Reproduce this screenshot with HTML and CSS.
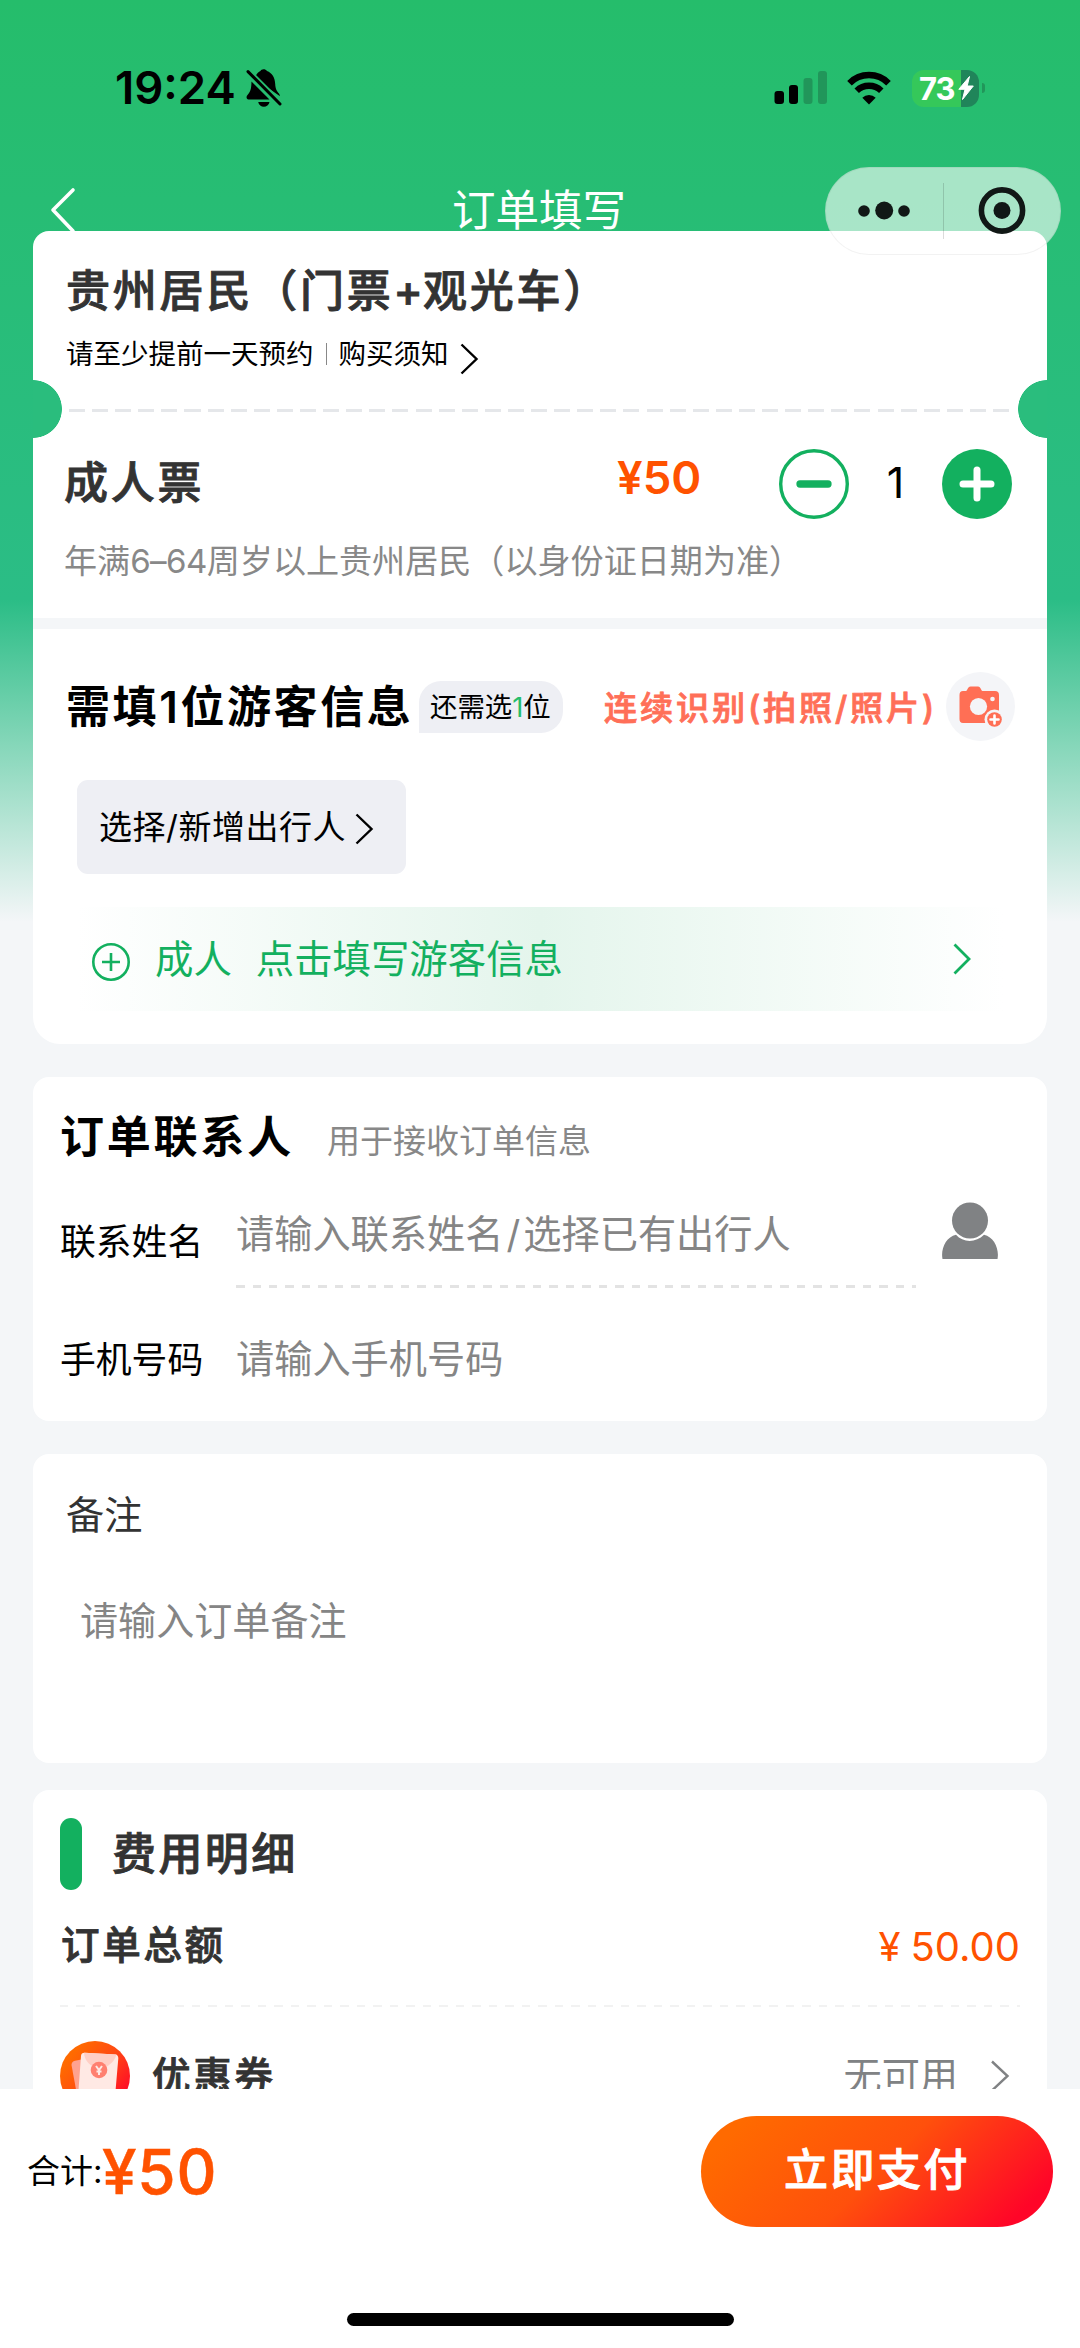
FILE: index.html
```html
<!DOCTYPE html>
<html lang="zh-CN">
<head>
<meta charset="utf-8">
<title>订单填写</title>
<link rel="stylesheet" href="styles.css">
</head>
<body>
<div class="page">
  <main class="scroll">
    <header class="header">
      <div class="status">
        <div class="status-left">
          <span class="time">19:24</span>
          <svg class="bell" width="36" height="40" viewBox="0 0 36 40">
            <path d="M8.5 10.5 C10.5 5.500 13 3.500 14.500 3 C15 .8 19.500 .3 21 3 C26 5 29 9.500 29.200 16 C29.400 21 31 23.500 33.300 26 L34 28.200 Z M5.500 13.500 L23.500 31.500 H2.500 C.2 31.500 0 28.500 1.500 27 C4.500 23.500 5.300 21 5.500 13.500 Z M12.200 34 H23.500 C22.500 40.300 13.200 40.300 12.200 34 Z"/>
            <path d="M1.500 3.200 L34.500 36.200" stroke="#27bd70" stroke-width="6.500"/>
            <path d="M2 3.600 L34 36" stroke="#000" stroke-width="3" stroke-linecap="round"/>
          </svg>
        </div>
        <div class="status-right">
          <svg width="54" height="34" viewBox="0 0 54 34">
            <rect x="0.500" y="20" width="9.500" height="13" rx="3"/>
            <rect x="15" y="14" width="9" height="19" rx="3"/>
            <rect x="29.500" y="7" width="9" height="26" rx="3" fill="#21965a"/>
            <rect x="44" y="0" width="9" height="33" rx="3" fill="#21965a"/>
          </svg>
          <svg class="wifi" width="46" height="34" viewBox="0 0 46 34">
            <path d="M3.500 12.200 A27.500 27.500 0 0 1 42.500 12.200" fill="none" stroke="#000" stroke-width="6.500"/>
            <path d="M10.700 19.800 A17.500 17.500 0 0 1 35.300 19.800" fill="none" stroke="#000" stroke-width="6.300"/>
            <path d="M23 33.500 L16.300 26.700 A9.800 9.800 0 0 1 29.700 26.700 Z"/>
          </svg>
          <div class="battery"><span>73</span>
            <svg width="16" height="24" viewBox="0 0 16 24"><path d="M11.500 .5 L.8 13.300 H7 L4.500 23.500 L15.300 10 H9.200 Z" fill="#fff" stroke="#fff"/></svg>
          </div>
          <i class="nub"></i>
        </div>
      </div>
      <div class="nav">
        <svg class="back" width="28" height="48" viewBox="0 0 28 48"><path d="M24 4 L4 24 L24 45" fill="none" stroke="#fff" stroke-width="3.600" stroke-linecap="round" stroke-linejoin="round"/></svg>
        <h1>订单填写</h1>
      </div>
      <div class="capsule">
        <svg width="118" height="88" viewBox="0 0 118 88"><circle cx="38" cy="44" r="5.800"/><circle cx="58.200" cy="43.500" r="9"/><circle cx="78" cy="44" r="5.800"/></svg>
        <i></i>
        <svg width="118" height="88" viewBox="0 0 118 88"><circle cx="59" cy="43.500" r="20.600" fill="none" stroke="#111816" stroke-width="5.600"/><circle cx="59" cy="43.500" r="8.500"/></svg>
      </div>
    </header>

    <section class="card ticket">
      <h2 class="name">贵州居民（门票<span class="plus">+</span>观光车）</h2>
      <div class="notice">
        <span>请至少提前一天预约</span><i></i><span>购买须知</span>
        <svg width="20" height="34" viewBox="0 0 20 34"><path d="M2.500 2.500 L17.500 17 L2.500 31.500" fill="none" stroke="#000" stroke-width="2.400"/></svg>
      </div>
      <div class="tear"></div>
      <div class="type">
        <h2>成人票</h2>
        <span class="price">¥50</span>
        <svg class="step" width="70" height="70" viewBox="0 0 70 70"><circle cx="35" cy="35" r="33.300" fill="none" stroke="#13b05f" stroke-width="3.400"/><path d="M21 35 H49" stroke="#13b05f" stroke-width="7.300" stroke-linecap="round"/></svg>
        <span class="count">1</span>
        <svg class="step" width="70" height="70" viewBox="0 0 70 70"><circle cx="35" cy="35" r="35" fill="#13b05f"/><path d="M21 35 H49 M35 21 V49" stroke="#fff" stroke-width="7" stroke-linecap="round"/></svg>
      </div>
      <p class="desc">年满<span class="range">6–64</span>周岁以上贵州居民（以身份证日期为准）</p>
      <div class="band"></div>
      <div class="visitors">
        <h2>需填1位游客信息</h2>
        <span class="badge">还需选<b>1</b>位</span>
        <span class="scan">连续识别(拍照/照片)</span>
        <svg class="camera" width="69" height="69" viewBox="0 0 69 69">
          <circle cx="34.500" cy="34.500" r="34.500" fill="#f4f5f8"/>
          <path d="M17 19 H20 C21.500 19 21.500 14.500 24.500 14.500 H32 C35 14.500 35 19 36.500 19 H49 Q53 19 53 23 V47 Q53 51 49 51 H17 Q13.500 51 13.500 47 V23 Q13.500 19 17 19 Z" fill="#ff6f55"/>
          <circle cx="32.500" cy="34.500" r="8.600" fill="#f4f5f8"/>
          <circle cx="46.500" cy="27" r="2.300" fill="#f4f5f8"/>
          <circle cx="48.500" cy="47.500" r="10" fill="#f4f5f8"/>
          <circle cx="48.500" cy="47.500" r="7.300" fill="#ff6f55"/>
          <path d="M44.500 47.500 H52.500 M48.500 43.500 V51.500" stroke="#fff" stroke-width="2.600" stroke-linecap="round"/>
        </svg>
      </div>
      <div class="choose">选择/新增出行人
        <svg width="20" height="34" viewBox="0 0 20 34"><path d="M2.500 2.500 L17.500 17 L2.500 31.500" fill="none" stroke="#000" stroke-width="2.400"/></svg>
      </div>
      <div class="fill">
        <svg width="40" height="40" viewBox="0 0 40 40"><path d="M20 11 V29 M11 20 H29" stroke="#13b05f" stroke-width="2.600"/><circle cx="20" cy="20" r="17.700" fill="none" stroke="#13b05f" stroke-width="2.600"/></svg>
        <span class="who">成人</span><span>点击填写游客信息</span>
        <svg class="go" width="20" height="34" viewBox="0 0 20 34"><path d="M2.500 2.500 L17 17 L2.500 31.500" fill="none" stroke="#13b05f" stroke-width="2.800"/></svg>
      </div>
    </section>

    <section class="card contact">
      <div class="contact-head"><h2>订单联系人</h2><span>用于接收订单信息</span></div>
      <div class="row first">
        <label>联系姓名</label>
        <div class="field line">请输入联系姓名<span class="slash">/</span>选择已有出行人</div>
        <svg class="person" width="58" height="60" viewBox="0 0 58 60">
          <path d="M1.500 58 C-.5 48 5 36 15 33.800 C22 42 35 42 43 33.800 C53 36 58.500 48 56.500 58 Z" fill="#808284"/>
          <circle cx="29" cy="19.500" r="18" fill="#808284"/>
        </svg>
      </div>
      <div class="row second">
        <label>手机号码</label>
        <div class="field">请输入手机号码</div>
      </div>
    </section>

    <section class="card remark">
      <h3>备注</h3>
      <p>请输入订单备注</p>
    </section>

    <section class="card fees">
      <div class="fees-head"><i></i><h2>费用明细</h2></div>
      <div class="total"><h3>订单总额</h3><span><em>¥</em>50.00</span></div>
      <div class="dash"></div>
      <div class="coupon">
        <svg width="70" height="70" viewBox="0 0 70 70">
          <defs><linearGradient id="c" x1="0" y1="0" x2="1" y2=".8"><stop offset=".2" stop-color="#ff6a00"/><stop offset=".55" stop-color="#ff4a12"/><stop offset=".95" stop-color="#ff0a28"/></linearGradient></defs>
          <circle cx="35" cy="35" r="35" fill="url(#c)"/>
          <path d="M11.500 24 Q11.500 20.500 15 19.800 L24 18 V54 H17 Z" fill="#ffa28f"/>
          <path d="M21 15 Q21.200 11.500 25 11.700 L55 13.500 Q58.500 13.800 58.300 17.500 L55 56 H18 Z" fill="#ffe9e4"/>
          <path d="M24 11.700 L56.500 13.600 C54 22 47 27 40 27 C31 27 24.500 20 24 11.700 Z" fill="#ffcfc5"/>
          <circle cx="39" cy="29" r="8.300" fill="#ff8070"/>
          <path d="M36 25 L39 29 L42 25 M39 29 V34 M36.500 30.500 H41.500" fill="none" stroke="#ffe9e4" stroke-width="2"/>
        </svg>
        <h3>优惠券</h3>
        <span>无可用</span>
        <svg class="more" width="20" height="34" viewBox="0 0 20 34"><path d="M2 2.500 L17.500 17 L2 31.500" fill="none" stroke="#808284" stroke-width="2.400"/></svg>
      </div>
    </section>
  </main>

  <footer class="footer">
    <div class="paybar">
      <span class="sum">合计:</span><span class="amount">¥50</span>
      <div class="pay">立即支付</div>
    </div>
    <div class="home"></div>
  </footer>
</div>
</body>
</html>
```

FILE: styles.css
```css
* { box-sizing: border-box; }
body, h1, h2, h3, p { margin: 0; }
i, em { font-style: normal; display: block; }
svg { display: block; flex: none; }
body {
  width: 1080px;
  font-family: Inter, "Noto Sans CJK SC", sans-serif;
  color: #000;
}
h2, h3 { font-weight: 500; color: #333; -webkit-text-stroke: .9px currentColor; }
h2 { font-size: 44px; letter-spacing: 2.8px; line-height: 60px; white-space: nowrap; }

.page { height: 2348px; display: flex; flex-direction: column; overflow: hidden; }
.scroll {
  flex: none;
  height: 2089px;
  overflow: hidden;
  background: linear-gradient(180deg, #25bd6b 0, #2bbd86 600px, #f4f6f8 922px);
}

/* status bar and title */
.header { position: relative; height: 231px; }
.status { height: 176px; padding: 0 95px 0 115px; display: flex; justify-content: space-between; align-items: center; }
.status-left, .status-right { display: flex; align-items: center; }
.time { font-size: 45.500px; font-weight: 600; line-height: 50px; width: 131px; white-space: nowrap; }
.wifi { margin: 0 20px 0 18px; }
.battery {
  width: 67px; height: 37px; border-radius: 12px; padding: 0 4px 0 7px;
  display: flex; align-items: center; gap: 2px;
  background: linear-gradient(90deg, #35c85a 49px, #20855a 49px);
}
.battery span { font-size: 31px; font-weight: 700; color: #fff; line-height: 37px; width: 37px; letter-spacing: -1px; }
.nub { width: 3px; height: 10px; margin-left: 3px; background: #21965a; border-radius: 0 4px 4px 0; }
.nav { height: 68px; padding-right: 2px; display: flex; align-items: center; justify-content: center; }
.back { position: absolute; left: 49px; top: 186px; }
.nav h1 { font-size: 43.500px; font-weight: 400; color: #fff; line-height: 68px; }
.capsule {
  position: absolute; z-index: 2; left: 825px; top: 167px; width: 236px; height: 88px;
  border-radius: 44px; border: 1px solid rgba(0,0,0,.05);
  background: rgba(255,255,255,.6);
  display: flex; align-items: center; justify-content: center; fill: #111816;
}
.capsule svg { margin: 0 -1px; }
.capsule i { width: 1px; height: 56px; background: rgba(0,0,0,.14); }

.card { position: relative; margin: 0 33px; background: #fff; border-radius: 16px; }

/* ticket */
.ticket { height: 813px; padding-top: 30px; border-radius: 16px 16px 27px 27px; }
.name { padding-left: 33px; }
.name .plus { letter-spacing: 0; }
.notice { margin: 13px 0 6px 33px; height: 40px; display: flex; align-items: center; font-size: 27.500px; line-height: 40px; }
.notice i { width: 1px; height: 22px; background: #888; margin: 0 12px; }
.notice svg { margin: 9px 0 0 10px; }
.tear {
  height: 58px;
  background:
    radial-gradient(circle 29px at 0 50%, #2abd7d 28.500px, transparent 29.200px),
    radial-gradient(circle 29px at 100% 50%, #2abd7d 28.500px, transparent 29.200px),
    repeating-linear-gradient(90deg, #e5e7ea 0 16px, transparent 16px 23.100px) 36px 29px / 941px 3px no-repeat;
}
.type { height: 91px; padding: 0 35px 0 31px; display: flex; align-items: center; }
.type h2 { flex: 1; margin-top: -2px; }
.price { font-size: 45.500px; font-weight: 600; line-height: 50px; color: #ff5200; width: 162px; margin-top: -12px; }
.count { width: 93px; text-align: center; font-size: 43px; line-height: 50px; margin-top: -3px; }
.desc { margin: 12px 0 36px 31px; font-size: 33.100px; line-height: 41px; color: #888; white-space: nowrap; }
.range { letter-spacing: -.6px; }
.band { height: 11px; background: #f4f6f8; }
.visitors { margin: 43px 32px 0 33px; height: 69px; display: flex; align-items: center; }
.visitors h2 { color: #000; width: 353px; font-weight: 600; letter-spacing: 2.600px; -webkit-text-stroke: 0; }
.badge {
  width: 144px; height: 52px; background: #eeeff4; border-radius: 22px 22px 22px 0;
  font-size: 27.400px; line-height: 53px; padding-left: 11px; white-space: nowrap;
}
.badge b { font-weight: 400; color: #25bd6b; }
.scan {
  flex: 1; padding-left: 41px; margin-top: -3px; font-size: 33.200px; letter-spacing: 2.800px; font-weight: 500;
  color: #ff6f58; white-space: nowrap; -webkit-text-stroke: .8px currentColor;
}
.choose {
  margin: 39px 0 33px 44px; width: 329px; height: 94px; padding-left: 22px; border-radius: 11px;
  background: #eeeff4; display: flex; align-items: center; font-size: 33px; letter-spacing: .5px; line-height: 92px;
}
.choose svg { margin: 4px 0 0 8px; }
.fill {
  margin: 0 44px; height: 104px; padding: 0 31px 0 14px; display: flex; align-items: center;
  font-size: 38.400px; color: #13b05f; line-height: 102px;
  background: linear-gradient(90deg, #fff, #e4f5ec 50%, #fff);
}
.fill svg { margin-top: 5px; }
.fill .who { margin: 0 24px 0 24px; }
.fill .go { margin: 0 0 0 auto; }

/* contact */
.contact { margin-top: 33px; height: 344px; padding: 30px 27px 0 27px; }
.contact-head { display: flex; align-items: center; height: 60px; }
.contact-head h2 { width: 267px; color: #000; font-weight: 600; -webkit-text-stroke: 0; }
.contact-head span { font-size: 33px; color: #888; padding-top: 3px; }
.row { display: flex; align-items: center; }
.row label { width: 176px; font-size: 35.800px; line-height: 50px; }
.first { height: 106px; margin-top: 15px; }
.first label { padding-top: 13px; }
.field { font-size: 38.200px; color: #858585; white-space: nowrap; line-height: 105px; }
.line {
  width: 680px; height: 106px;
  background: repeating-linear-gradient(90deg, #e3e3e3 0 8.500px, transparent 8.500px 16.500px) 0 103px / 680px 3px no-repeat;
}
.slash { display: inline-block; width: 20px; text-align: center; }
.person { margin: -8px 0 0 25px; }
.second { height: 143px; }

/* remark */
.remark { margin-top: 33px; height: 309px; padding: 31px 33px 0; }
.remark h3 { font-size: 38.200px; font-weight: 400; line-height: 60px; letter-spacing: 0; -webkit-text-stroke: 0; }
.remark p { margin: 46px 0 0 14px; font-size: 38.100px; line-height: 60px; color: #858585; }

/* fees */
.fees { margin-top: 27px; height: 400px; padding: 28px 27px 0; }
.fees-head { height: 72px; display: flex; align-items: center; }
.fees-head h2 { letter-spacing: 2.400px; }
.fees-head i { width: 22px; height: 72px; border-radius: 11px; background: #13b05f; margin-right: 30px; }
.fees h3 { font-size: 38.500px; letter-spacing: 2.700px; line-height: 60px; }
.total { margin: 25px 0 30px; height: 60px; display: flex; justify-content: space-between; align-items: center; }
.total h3 { margin-left: 1px; }
.total span { display: flex; gap: 10px; font-size: 40px; line-height: 60px; color: #ff5200; padding-top: 3px; }
.dash { height: 2px; background: repeating-linear-gradient(90deg, #f2f2f2 0 8.500px, transparent 8.500px 16.500px); }
.coupon { margin-top: 34px; height: 70px; display: flex; align-items: center; }
.coupon h3 { margin: 0 auto 0 22px; }
.coupon span { font-size: 38.200px; color: #808284; line-height: 60px; margin-top: -1px; }
.coupon .more { margin: 0 10px 0 32px; }

/* footer */
.footer { height: 259px; background: #fff; padding-top: 27px; display: flex; flex-direction: column; align-items: center; }
.paybar { width: 1080px; height: 111px; padding: 0 27px 0 27px; display: flex; align-items: center; }
.sum { font-size: 33px; width: 75px; line-height: 60px; margin-top: -2px; white-space: nowrap; }
.amount { font-size: 62px; letter-spacing: .8px; font-weight: 500; line-height: 70px; color: #ff5200; -webkit-text-stroke: .5px currentColor; }
.pay {
  margin-left: auto; width: 352px; height: 111px; border-radius: 56px; color: #fff;
  background: linear-gradient(135deg, #ff6a00 10%, #ff500c 50%, #ff0528 90%);
  font-size: 44px; letter-spacing: 2.500px; font-weight: 500; line-height: 109px; text-align: center;
  -webkit-text-stroke: .9px currentColor;
}
.home { margin-top: 86px; width: 387px; height: 13px; border-radius: 7px; background: #000; }
```
